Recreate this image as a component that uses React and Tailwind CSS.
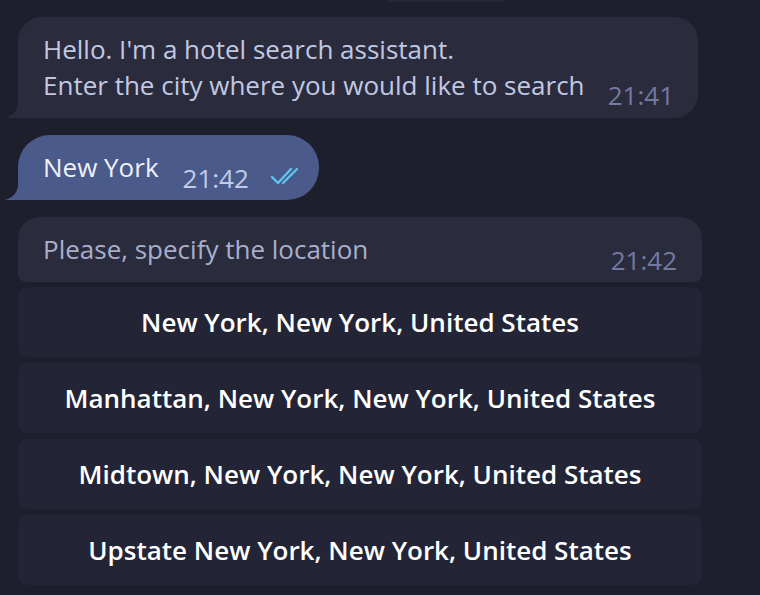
const font = { fontFamily: '"Open Sans", "Noto Sans", sans-serif' };

function Tail({ color }) {
  return (
    <svg
      className="absolute bottom-0 -left-[13px]"
      width="14"
      height="22"
      viewBox="0 0 14 22"
    >
      <path d="M14 0 C14 12 10 19 0 22 L14 22 Z" fill={color} />
    </svg>
  );
}

function DoubleCheck() {
  return (
    <svg width="34" height="20" viewBox="0 0 34 20" fill="none" stroke="#5fc4ee" strokeWidth="2.4" strokeLinecap="round" strokeLinejoin="round">
      <path d="M2 11 L8 17 L21 3" />
      <path d="M13 17 L27 3" />
    </svg>
  );
}

const buttons = [
  "New York, New York, United States",
  "Manhattan, New York, New York, United States",
  "Midtown, New York, New York, United States",
  "Upstate New York, New York, United States",
];

export default function App() {
  return (
    <div className="w-[760px] h-[595px] overflow-hidden bg-[#1e1f2d]" style={font}>
      <div className="h-[2px] ml-[387px] w-[118px] bg-[#262838]" />

      <div className="pl-[18px] pt-[15px]">
        <div className="relative w-[680px] h-[101px] bg-[#2a2c3d] rounded-[24px] rounded-bl-none pl-[25px] pr-[24px] pt-[14px] flex justify-between items-end pb-[8px]">
          <Tail color="#2a2c3d" />
          <div className="text-[26px] leading-[36px] text-[#c2c8e2] self-start">
            <div>Hello. I'm a hotel search assistant.</div>
            <div>Enter the city where you would like to search</div>
          </div>
          <div className="text-[26px] leading-[30px] text-[#7479a2]">21:41</div>
        </div>

        <div className="relative mt-[17px] w-[301px] h-[65px] bg-[#4a5a8b] rounded-[32px] rounded-bl-none pl-[25px] flex items-start pt-[14px]">
          <Tail color="#4a5a8b" />
          <div className="text-[26px] leading-[36px] text-[#eef0fa]">New York</div>
          <div className="ml-[24px] mt-[11px] text-[26px] leading-[36px] text-[#c3cbe8]">21:42</div>
          <div className="ml-[21px] mt-[17px]">
            <DoubleCheck />
          </div>
        </div>

        <div className="mt-[17px] w-[684px] h-[65px] bg-[#2a2c3d] rounded-t-[22px] rounded-b-[8px] pl-[25px] pr-[25px] flex justify-between">
          <div className="pt-[14px] text-[26px] leading-[36px] text-[#a9afcb]">Please, specify the location</div>
          <div className="pt-[25px] text-[26px] leading-[36px] text-[#7479a2]">21:42</div>
        </div>

        <div className="mt-[5px] w-[684px] flex flex-col gap-[6px]">
          {buttons.map((b) => (
            <div
              key={b}
              className="h-[70px] rounded-[10px] bg-[#232536] flex items-center justify-center text-[26px] font-semibold text-white"
            >
              {b}
            </div>
          ))}
        </div>
      </div>
    </div>
  );
}
